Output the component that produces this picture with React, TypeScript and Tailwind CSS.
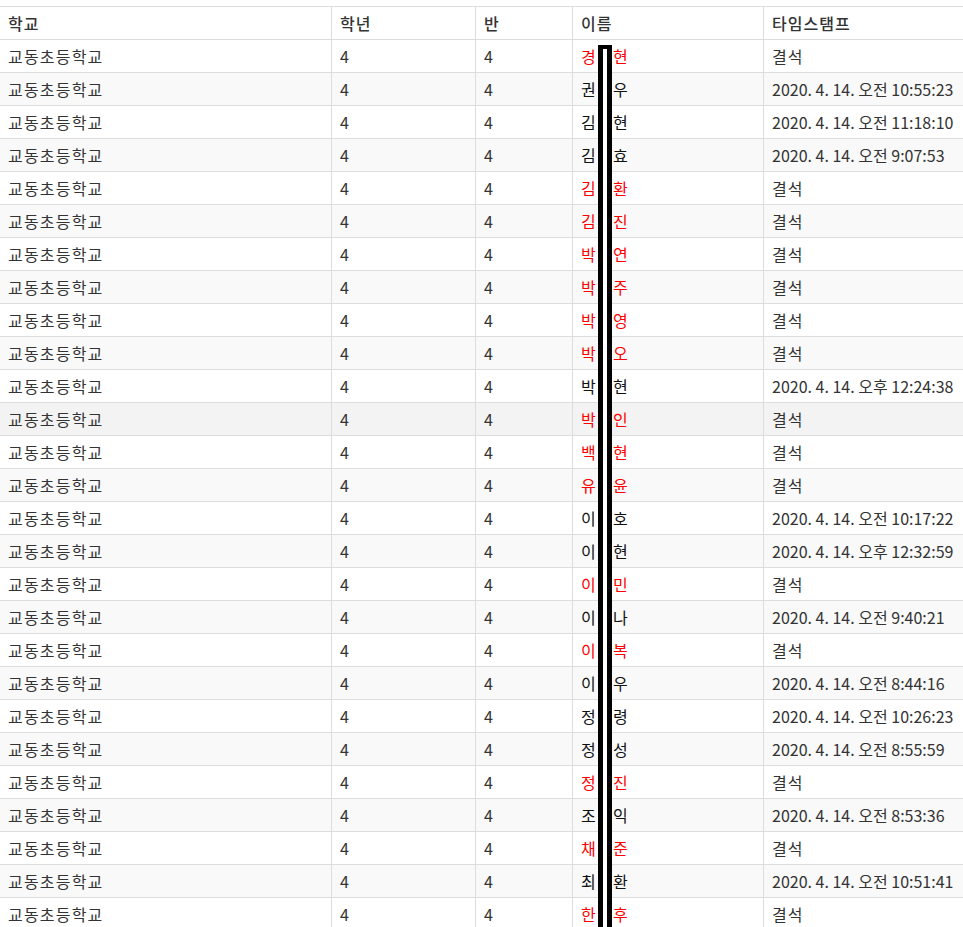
import React from "react";

type Row = { a: string; b: string; red: boolean; t: string };

const rows: Row[] = [
  { a: "경", b: "현", red: true, t: "결석" },
  { a: "권", b: "우", red: false, t: "2020. 4. 14. 오전 10:55:23" },
  { a: "김", b: "현", red: false, t: "2020. 4. 14. 오전 11:18:10" },
  { a: "김", b: "효", red: false, t: "2020. 4. 14. 오전 9:07:53" },
  { a: "김", b: "환", red: true, t: "결석" },
  { a: "김", b: "진", red: true, t: "결석" },
  { a: "박", b: "연", red: true, t: "결석" },
  { a: "박", b: "주", red: true, t: "결석" },
  { a: "박", b: "영", red: true, t: "결석" },
  { a: "박", b: "오", red: true, t: "결석" },
  { a: "박", b: "현", red: false, t: "2020. 4. 14. 오후 12:24:38" },
  { a: "박", b: "인", red: true, t: "결석" },
  { a: "백", b: "현", red: true, t: "결석" },
  { a: "유", b: "윤", red: true, t: "결석" },
  { a: "이", b: "호", red: false, t: "2020. 4. 14. 오전 10:17:22" },
  { a: "이", b: "현", red: false, t: "2020. 4. 14. 오후 12:32:59" },
  { a: "이", b: "민", red: true, t: "결석" },
  { a: "이", b: "나", red: false, t: "2020. 4. 14. 오전 9:40:21" },
  { a: "이", b: "복", red: true, t: "결석" },
  { a: "이", b: "우", red: false, t: "2020. 4. 14. 오전 8:44:16" },
  { a: "정", b: "령", red: false, t: "2020. 4. 14. 오전 10:26:23" },
  { a: "정", b: "성", red: false, t: "2020. 4. 14. 오전 8:55:59" },
  { a: "정", b: "진", red: true, t: "결석" },
  { a: "조", b: "익", red: false, t: "2020. 4. 14. 오전 8:53:36" },
  { a: "채", b: "준", red: true, t: "결석" },
  { a: "최", b: "환", red: false, t: "2020. 4. 14. 오전 10:51:41" },
  { a: "한", b: "후", red: true, t: "결석" },
];

const grid = "grid grid-cols-[331px_144px_97px_191px_200px]";
const cell = "h-[32px] flex items-center pl-[8px] whitespace-nowrap";
const cellB = cell + " border-l border-[#dddddd]";

export default function App() {
  return (
    <div
      className="relative w-[963px] h-[927px] overflow-hidden bg-white pt-[6px] text-[16px] text-[#333333]"
      style={{ fontFamily: '"Noto Sans CJK KR", "Noto Sans", sans-serif' }}
    >
      <div className="border-t border-[#dddddd]">
        <div className={grid + " border-b border-[#dddddd] font-medium"}>
          <div className={cell + " tracking-[1px]"}>학교</div>
          <div className={cellB + " tracking-[1px]"}>학년</div>
          <div className={cellB}>반</div>
          <div className={cellB + " tracking-[1px]"}>이름</div>
          <div className={cellB + " tracking-[1px]"}>타임스탬프</div>
        </div>
        {rows.map((r, i) => {
          const bg = i === 11 ? "bg-[#f3f3f3]" : i % 2 === 1 ? "bg-[#f9f9f9]" : "bg-white";
          return (
            <div key={i} className={grid + " border-b border-[#dddddd] " + bg}>
              <div className={cell + " tracking-[1.2px]"}>교동초등학교</div>
              <div className={cellB}>4</div>
              <div className={cellB}>4</div>
              <div className={cellB + (r.red ? " text-[#ff0000]" : " text-[#111111]")}>
                <span className="inline-block w-[16px]">{r.a}</span>
                <span className="inline-block w-[16px]" />
                <span>{r.b}</span>
              </div>
              <div className={cellB + (r.t === "결석" ? " tracking-[1px]" : "")}>{r.t}</div>
            </div>
          );
        })}
      </div>
      <div className="absolute left-[598px] top-[45px] w-[14px] h-[900px] border-x-[5px] border-t-[4px] border-black bg-white" />
    </div>
  );
}
